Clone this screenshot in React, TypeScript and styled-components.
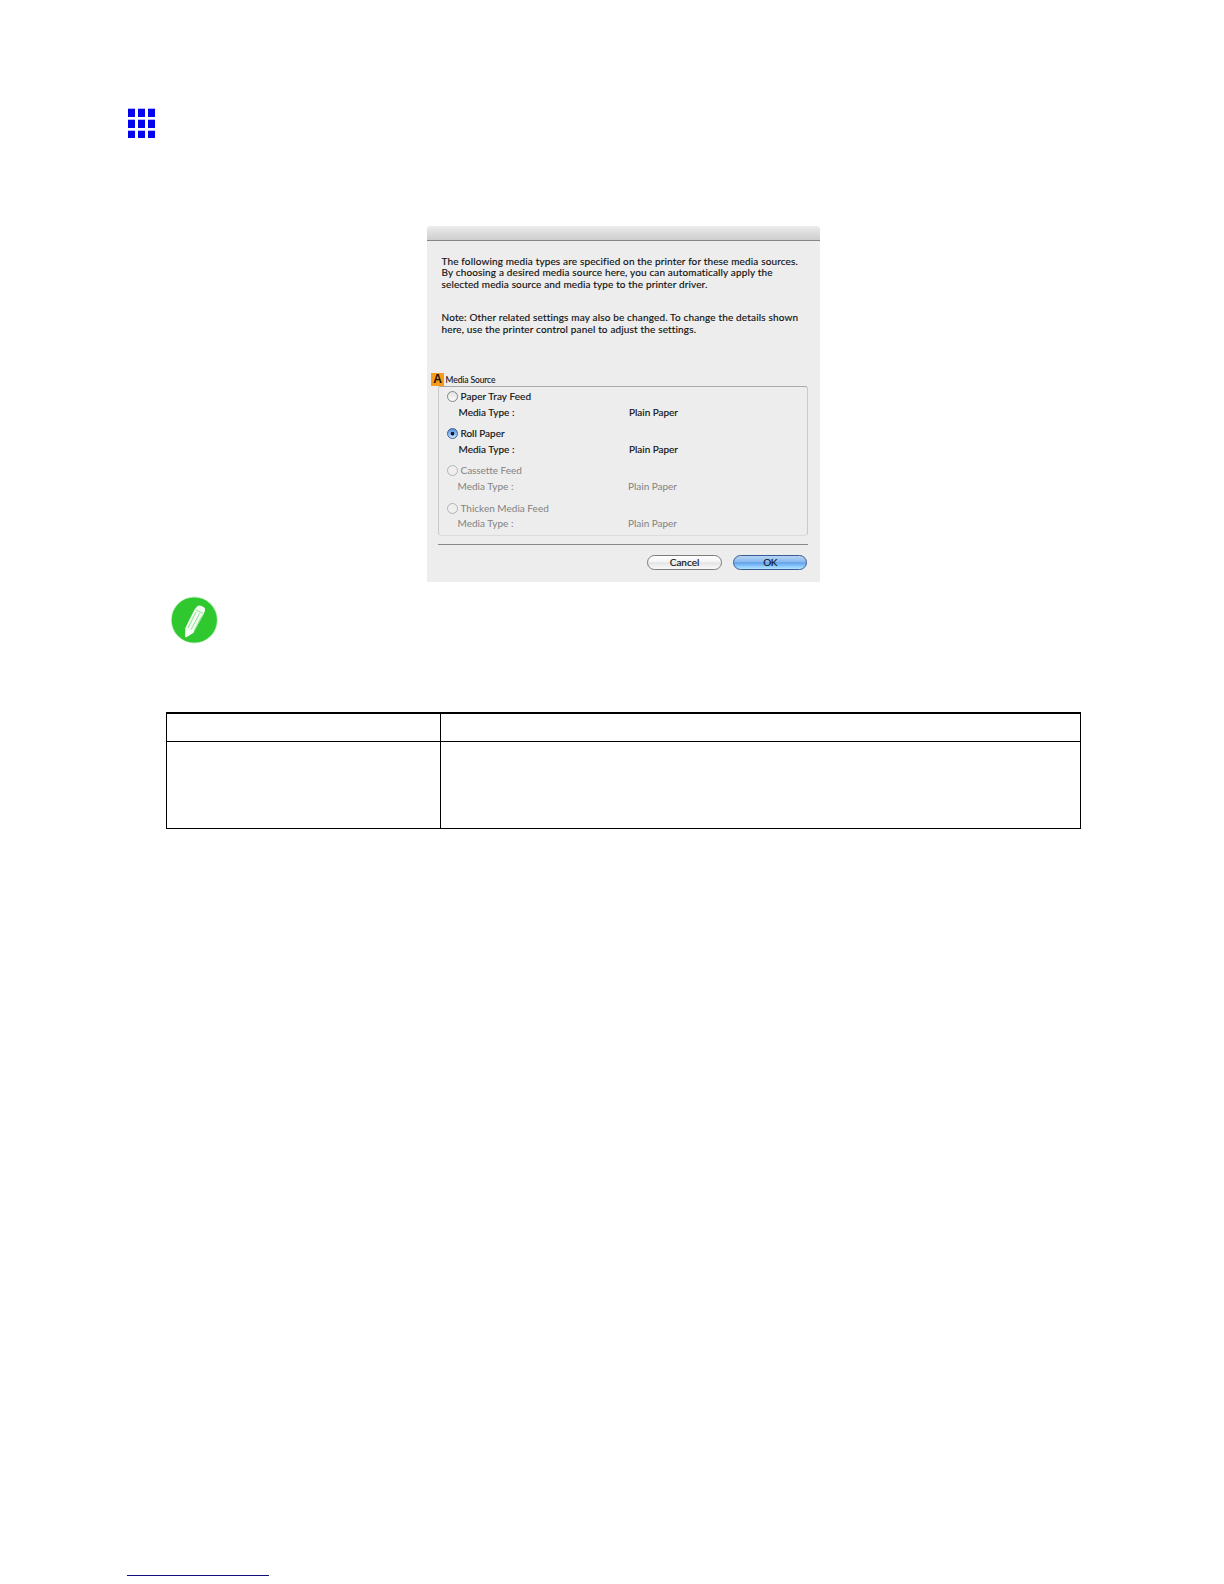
import React from "react";
import styled, { createGlobalStyle } from "styled-components";

const GlobalStyle = createGlobalStyle`
  * { box-sizing: border-box; }
  body { margin: 0; background: #fff; }
`;

const Page = styled.main`
  width: 1224px;
  height: 1584px;
  overflow: hidden;
  display: flex;
  flex-direction: column;
  align-items: flex-start;
  background: #fff;
  color: #111;
  font-family: Lato, "Noto Sans", sans-serif;
  font-size: 10px;
`;

const SectionMark = styled.div`
  display: grid;
  grid-template-columns: repeat(3, 7px);
  grid-template-rows: 8px 8px 7px;
  column-gap: 3px;
  row-gap: 3px;
  margin: 109px 0 0 128px;
`;

const MarkCell = styled.span`
  background: #0404ee;
  box-shadow: 0 -1px 0 #b4b4ff;
`;

const Dialog = styled.section`
  width: 393px;
  height: 356px;
  margin: 88px 0 0 427px;
  display: flex;
  flex-direction: column;
  background: #ededed;
  border-radius: 4px 4px 0 0;
`;

const TitleBar = styled.header`
  height: 15px;
  flex: none;
  border-bottom: 1px solid #858585;
  border-radius: 4px 4px 0 0;
  background: linear-gradient(#ececec, #dedede 45%, #cecece);
`;

const Message = styled.div<{ $top: number }>`
  margin: ${(p) => p.$top}px 0 0 14.5px;
  display: flex;
  flex-direction: column;
`;

const Line = styled.span<{ $spacing: number }>`
  height: 11.33px;
  line-height: 11.33px;
  white-space: nowrap;
  letter-spacing: ${(p) => p.$spacing}px;
  -webkit-text-stroke: 0.15px currentColor;
`;

const Legend = styled.div`
  display: flex;
  align-items: center;
  height: 13px;
  margin: 38px 0 0 4px;
`;

const Badge = styled.span`
  width: 13px;
  height: 13px;
  display: flex;
  align-items: center;
  justify-content: center;
  background: #f79b1c;
  color: #1c1408;
  font: bold 12px/13px "Liberation Sans", sans-serif;
`;

const LegendText = styled.span`
  margin-left: 1.6px;
  padding-top: 1px;
  font-size: 8.5px;
  line-height: 12px;
  letter-spacing: -0.1px;
  -webkit-text-stroke: 0.1px currentColor;
`;

const Group = styled.div`
  width: 370px;
  height: 150px;
  margin-left: 11px;
  border: 1px solid #c9c9c9;
  border-top-color: #a9a9a9;
  border-bottom-color: #dcdcdc;
  border-radius: 2px 3px 4px 4px;
  display: flex;
  flex-direction: column;
`;

const Source = styled.div<{ $top: number; $gap: number; $disabled?: boolean }>`
  margin-top: ${(p) => p.$top}px;
  display: grid;
  grid-template-rows: 12px 12px;
  row-gap: ${(p) => p.$gap}px;
  color: ${(p) => (p.$disabled ? "#828282" : "#111")};
  -webkit-text-stroke: ${(p) => (p.$disabled ? "0" : "0.15px")} currentColor;
  line-height: 12px;
`;

const Choice = styled.label`
  display: flex;
  align-items: center;
  padding-left: 8px;
  gap: 2.5px;
`;

const Radio = styled.span<{ $checked?: boolean; $disabled?: boolean }>`
  width: 11px;
  height: 11px;
  flex: none;
  border-radius: 50%;
  border: 1px solid
    ${(p) => (p.$checked ? "#3a5f9c" : p.$disabled ? "#b4b4b4" : "#858585")};
  background: ${(p) =>
    p.$checked
      ? "radial-gradient(circle at 50% 52%, #0d1c3a 0 1.5px, transparent 2.2px), linear-gradient(#5c8fd4, #8cbcf0 55%, #d4f0ff)"
      : p.$disabled
        ? "#efefef"
        : "linear-gradient(#e2e2e2, #fbfbfb)"};
`;

const Label = styled.span<{ $spacing: number }>`
  white-space: nowrap;
  letter-spacing: ${(p) => p.$spacing}px;
`;

const Detail = styled.div<{ $disabled?: boolean }>`
  display: grid;
  grid-template-columns: 170.5px auto;
  justify-content: start;
  padding-left: ${(p) => (p.$disabled ? 18.5 : 19.5)}px;
`;

const Divider = styled.hr`
  width: 370px;
  height: 1px;
  margin: 8px 0 0 11px;
  border: 0;
  background: #888;
`;

const Actions = styled.footer`
  display: flex;
  justify-content: flex-end;
  gap: 11px;
  margin: 10px 13px 0 0;
`;

const Button = styled.button<{ $primary?: boolean }>`
  width: ${(p) => (p.$primary ? 74 : 75)}px;
  height: 15px;
  padding: 0;
  border: 1px solid ${(p) => (p.$primary ? "#3c5a94" : "#7c7c7c")};
  border-radius: 8px;
  background: ${(p) =>
    p.$primary
      ? "linear-gradient(#b6d4f6 0%, #8dbcf0 42%, #62a4ea 52%, #86c4fa 75%, #b0e6ff 100%)"
      : "linear-gradient(#ffffff 0%, #f4f4f4 45%, #e4e4e4 52%, #fafafa 100%)"};
  color: #111;
  font: 10px/13px Lato, "Noto Sans", sans-serif;
  letter-spacing: ${(p) => (p.$primary ? -0.6 : 0)}px;
  -webkit-text-stroke: 0.15px currentColor;
`;

const NoteIcon = styled.svg`
  display: block;
  width: 50px;
  height: 50px;
  margin: 13px 0 0 169px;
`;

const Table = styled.div`
  width: 915px;
  height: 117px;
  margin: 67px 0 0 166px;
  display: grid;
  grid-template-columns: 273px 1fr;
  grid-template-rows: 27px 1fr;
  gap: 1px;
  padding: 2px 1px 1px;
  background: #000;
`;

const Cell = styled.div`
  background: #fff;
`;

const FooterLink = styled.div`
  width: 142px;
  height: 1px;
  margin: 746px 0 0 127px;
  background: #10107c;
`;

const intro: [string, number][] = [
  ["The following media types are specified on the printer for these media sources.", 0.148],
  ["By choosing a desired media source here, you can automatically apply the", 0.15],
  ["selected media source and media type to the printer driver.", 0.138],
];

const note: [string, number][] = [
  ["Note: Other related settings may also be changed. To change the details shown", 0.16],
  ["here, use the printer control panel to adjust the settings.", 0.157],
];

const sources = [
  { name: "Paper Tray Feed", spacing: 0.08, top: 3, gap: 4 },
  { name: "Roll Paper", spacing: -0.02, top: 9, gap: 4, checked: true },
  { name: "Cassette Feed", spacing: -0.05, top: 9, gap: 4, disabled: true },
  { name: "Thicken Media Feed", spacing: 0.01, top: 10, gap: 3, disabled: true },
];

export default function App() {
  return (
    <Page>
      <GlobalStyle />
      <SectionMark>
        {Array.from({ length: 9 }, (_, i) => (
          <MarkCell key={i} />
        ))}
      </SectionMark>

      <Dialog>
        <TitleBar />
        <Message $top={15}>
          {intro.map(([text, spacing]) => (
            <Line key={text} $spacing={spacing}>{text}</Line>
          ))}
        </Message>
        <Message $top={22.5}>
          {note.map(([text, spacing]) => (
            <Line key={text} $spacing={spacing}>{text}</Line>
          ))}
        </Message>

        <Legend>
          <Badge>A</Badge>
          <LegendText>Media Source</LegendText>
        </Legend>
        <Group>
          {sources.map((s) => (
            <Source key={s.name} $top={s.top} $gap={s.gap} $disabled={s.disabled}>
              <Choice>
                <Radio $checked={s.checked} $disabled={s.disabled} />
                <Label $spacing={s.spacing}>{s.name}</Label>
              </Choice>
              <Detail $disabled={s.disabled}>
                <Label $spacing={0.02}>Media Type :</Label>
                <Label $spacing={-0.02}>Plain Paper</Label>
              </Detail>
            </Source>
          ))}
        </Group>
        <Divider />
        <Actions>
          <Button>Cancel</Button>
          <Button $primary>OK</Button>
        </Actions>
      </Dialog>

      <NoteIcon viewBox="0 0 50 50">
        <circle cx="25.3" cy="25" r="23.4" fill="#b9efb9" />
        <circle cx="25.3" cy="25" r="22.6" fill="#2fc82f" />
        <path
          d="M25.5 14.5 L28.5 11 Q30 10 32 10.8 L35 12.2 Q36.6 13.4 36 15.5 L34.5 19.5 L24.3 38 L17 42.5 L16 41.5 L16.3 33 Z"
          fill="#f2fcf2"
        />
        <path
          d="M27 17 L19 33 M30.5 18.5 L22.2 34.5 M33.5 20 L25 36 M26.5 14.8 L34.5 18.7"
          fill="none"
          stroke="#8fe08f"
          strokeWidth="1"
        />
        <path d="M17.8 35.5 L22.8 37.8 L18 40.8 Z" fill="#ffffff" />
      </NoteIcon>

      <Table>
        <Cell />
        <Cell />
        <Cell />
        <Cell />
      </Table>

      <FooterLink />
    </Page>
  );
}
